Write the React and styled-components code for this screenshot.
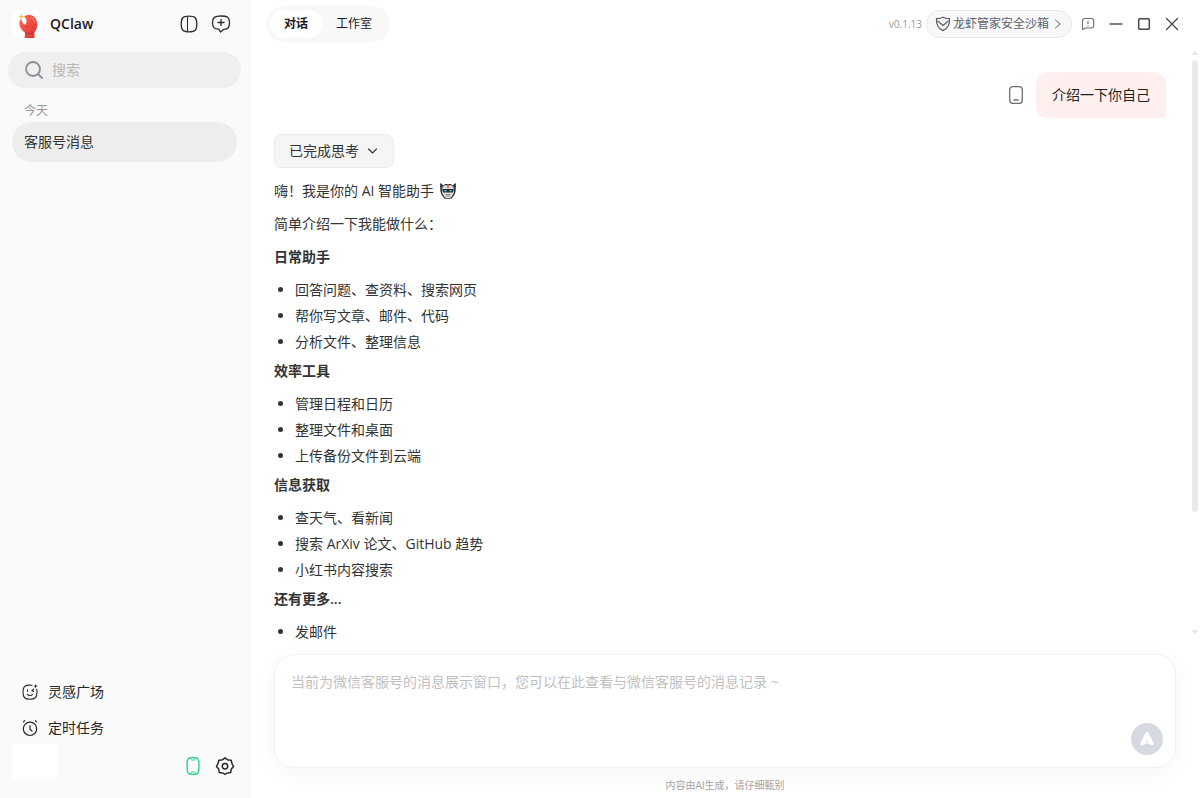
import React from "react";
import styled, { createGlobalStyle } from "styled-components";

const GlobalStyle = createGlobalStyle`
  *, *::before, *::after { box-sizing: border-box; }
  body {
    margin: 0;
    background: #fff;
    color: #333;
    font-family: "Open Sans", "Noto Sans CJK SC", sans-serif;
    font-size: 14px;
    line-height: 22px;
  }
  button, input, textarea { font: inherit; color: inherit; }
  button { border: 0; padding: 0; background: none; cursor: pointer; }
  svg { display: block; flex: none; }
`;

const Shell = styled.div`
  display: flex;
  height: 100vh;
  min-height: 480px;
`;

/* ---------- Sidebar ---------- */

const Sidebar = styled.aside`
  display: flex;
  flex-direction: column;
  flex: 0 0 250px;
  min-width: 0;
  padding-bottom: 17px;
  background: #fafafa;
  border-right: 1px solid #f0f0f0;
`;

const Brand = styled.header`
  display: flex;
  align-items: center;
  gap: 9px;
  height: 48px;
  padding: 0 16px 0 13px;
`;

const Logo = styled.span`
  width: 28px;
  height: 28px;
  border-radius: 7px;
  background: #fff;
`;

const BrandName = styled.h1`
  flex: 1;
  margin: 0;
  color: #1a1a1a;
  font-size: 14px;
  font-weight: 600;
`;

const IconButton = styled.button`
  display: grid;
  place-items: center;
  width: ${(p) => p.$width || 24}px;
  height: ${(p) => p.$height || 28}px;
  color: ${(p) => p.$color || "#2b2b2b"};
`;

const IconGroup = styled.div`
  display: flex;
  gap: 8px;
`;

const SearchBox = styled.label`
  display: flex;
  align-items: center;
  gap: 8px;
  height: 36px;
  margin: 4px 8px 0;
  padding: 0 16px;
  border-radius: 18px;
  background: #efefef;
  color: #8b8e96;
`;

const SearchInput = styled.input`
  flex: 1;
  min-width: 0;
  padding: 0;
  border: 0;
  outline: 0;
  background: none;
  &::placeholder { color: #b9b9b9; opacity: 1; }
`;

const GroupLabel = styled.h2`
  margin: 12px 24px 0;
  color: #999;
  font-size: 12px;
  font-weight: 400;
  line-height: 22px;
`;

const Conversation = styled.button`
  height: 40px;
  margin: 0 12px;
  padding: 0 12px;
  border-radius: 20px;
  background: #ededed;
  text-align: left;
`;

const SideNav = styled.nav`
  display: flex;
  flex-direction: column;
  gap: 4px;
  margin-top: auto;
`;

const SideLink = styled.a`
  display: flex;
  align-items: center;
  gap: 9px;
  height: 32px;
  padding: 0 21px;
  color: #262626;
  text-decoration: none;
`;

const SideFooter = styled.footer`
  display: flex;
  align-items: flex-end;
  justify-content: space-between;
  padding: 0 12px;
`;

const Account = styled.div`
  width: 45px;
  height: 37px;
  background: #fff;
`;

/* ---------- Main column ---------- */

const Main = styled.main`
  display: flex;
  flex-direction: column;
  flex: 1;
  min-width: 0;
`;

const TopBar = styled.header`
  display: flex;
  align-items: center;
  justify-content: space-between;
  height: 48px;
  padding: 0 14px 0 16px;
`;

const Tabs = styled.div`
  display: flex;
  padding: 4px;
  border-radius: 18px;
  background: #f8f8f8;
`;

const Tab = styled.button`
  height: 28px;
  padding: 0 14px;
  border-radius: 14px;
  background: ${(p) => (p.$active ? "#fff" : "transparent")};
  color: #1a1a1a;
  font-size: 12px;
  font-weight: ${(p) => (p.$active ? 600 : 400)};
`;

const WindowTools = styled.div`
  display: flex;
  align-items: center;
`;

const Version = styled.span`
  margin-right: 4px;
  color: #999;
  font-size: 10px;
`;

const SafetyPill = styled.button`
  display: flex;
  align-items: center;
  gap: 2px;
  height: 28px;
  margin-right: 2px;
  padding: 0 8px;
  border: 1px solid #e9e9e9;
  border-radius: 14px;
  background: #f8f8f8;
  color: #5c5f66;
  font-size: 12px;
`;

const ChatArea = styled.section`
  display: flex;
  flex: 1;
  min-height: 0;
`;

const Messages = styled.div`
  flex: 1;
  padding: 24px 26px 0 24px;
  overflow-y: auto;
  scrollbar-width: none;
`;

const Rail = styled.div`
  display: flex;
  flex-direction: column;
  flex: 0 0 8px;
  padding: 3px 2px 6px 0;
  color: #e3e3e3;
`;

const RailTrack = styled.div`
  flex: 1;
  margin: 5px 0;
`;

const RailThumb = styled.div`
  height: 80%;
  border-radius: 3px;
  background: #e9e9e9;
`;

const UserMessage = styled.div`
  display: flex;
  align-items: center;
  justify-content: flex-end;
  gap: 12px;
  color: #6b6e76;
`;

const Bubble = styled.p`
  margin: 0;
  padding: 12px 16px;
  border-radius: 12px 12px 2px 12px;
  background: #ffefee;
  color: #1f1f1f;
`;

const ThinkingToggle = styled.button`
  display: flex;
  align-items: center;
  gap: 8px;
  height: 34px;
  margin: 16px 0 12px;
  padding: 0 14px;
  border: 1px solid #ebebeb;
  border-radius: 8px;
  background: #f5f5f5;
`;

const Paragraph = styled.p`
  display: flex;
  align-items: center;
  gap: 6px;
  margin: 0 0 11px;
`;

const SectionTitle = styled.h3`
  margin: 0 0 11px;
  font-size: 14px;
  font-weight: 600;
`;

const Bullets = styled.ul`
  display: flex;
  flex-direction: column;
  gap: 4px;
  margin: 0 0 7px;
  padding-left: 21px;
`;

const Composer = styled.form`
  display: flex;
  align-items: flex-end;
  height: 114px;
  margin: 14px 24px 0;
  padding: 12px;
  border: 1px solid #f2f2f2;
  border-radius: 20px;
  background: #fff;
  box-shadow: 0 6px 24px rgba(0, 0, 0, 0.04);
`;

const Prompt = styled.textarea`
  flex: 1;
  align-self: stretch;
  padding: 4px;
  border: 0;
  outline: 0;
  resize: none;
  background: none;
  &::placeholder { color: #bfbfbf; opacity: 1; }
`;

const SendButton = styled.button`
  display: grid;
  place-items: center;
  width: 32px;
  height: 32px;
  border-radius: 50%;
  background: #d7d9e1;
`;

const Disclaimer = styled.p`
  margin: 8px 0 4px;
  color: #a3a3a3;
  font-size: 10px;
  line-height: 18px;
  text-align: center;
`;

/* ---------- Drawings ---------- */

const Line = ({ w = 18, h = w, box = `0 0 ${w} ${h}`, sw = 1.3, children }) => (
  <svg
    width={w}
    height={h}
    viewBox={box}
    fill="none"
    stroke="currentColor"
    strokeWidth={sw}
    strokeLinecap="round"
    strokeLinejoin="round"
    aria-hidden="true"
  >
    {children}
  </svg>
);

const ClawLogo = () => (
  <svg width="28" height="28" viewBox="0 0 28 28" aria-hidden="true">
    <defs>
      <linearGradient id="claw" x1="0" y1="0" x2="1" y2="1">
        <stop offset="0" stopColor="#ff7560" />
        <stop offset="0.5" stopColor="#ee4a40" />
        <stop offset="1" stopColor="#d93630" />
      </linearGradient>
    </defs>
    <path
      d="M11 6.500C13 5 15.200 4.400 17.500 4.900c4.300.9 6.900 5 6.700 10.100-.1 3.200-1.100 5.600-2.900 7.400l.3 6.600h-10l.4-6.200C9 20.800 6.500 17.600 6.300 14c-.1-2 .4-3.800 1.600-4.900l1.300 2.600c.6 1.400 1.500 2.600 2.800 3.200 1.300-1.400 1.900-3.400 1.300-5.200-.4-1.300-1.300-2.200-2.300-3.200z"
      fill="url(#claw)"
    />
    <path d="M11.500 14.800c.8 1.500 1.800 2.300 3.200 2.600" fill="none" stroke="#cf2f2a" strokeWidth="0.900" strokeLinecap="round" />
    <path d="M12 22.900c2.900 1.100 6.400.9 9.200-.5" fill="none" stroke="#c42a27" strokeWidth="0.900" />
    <path d="M17.500 7.200c2.400.9 3.900 3 4.100 5.800" fill="none" stroke="#ff9a86" strokeWidth="1.200" strokeLinecap="round" opacity="0.600" />
    <path d="M8.300 3.200l.8 2.600 2.600.9-2.600.9-.8 2.600-.8-2.600-2.600-.9 2.600-.9z" fill="#ffc638" />
  </svg>
);

const PanelIcon = () => (
  <Line w={18}>
    <path d="M9 1.200c6.200 0 7.800 1.600 7.800 7.800s-1.600 7.800-7.800 7.800S1.200 15.200 1.200 9 2.800 1.200 9 1.200z" />
    <path d="M7.500 1.500v15" strokeWidth="1.100" />
  </Line>
);

const NewChatIcon = () => (
  <Line w={20} h={18}>
    <path d="M10 1c6.300 0 8.500 1.300 8.500 6.500S17 14 12.800 14.300L9.500 17 8 14.200C3 14 1.500 12.500 1.500 7.500S3.700 1 10 1z" />
    <path d="M10 4.500v6M7 7.500h6" />
  </Line>
);

const SearchIcon = () => (
  <Line w={20} sw={1.8}>
    <circle cx="9" cy="9" r="7" />
    <path d="M14 14l4 4" />
  </Line>
);

const InspireIcon = () => (
  <Line w={18} sw={1.1}>
    <path d="M11 2.300C5 1.500 2 2.800 2 9.200c0 5.500 1.800 7 7 7s7-1.500 7-7c0-1.200-.1-2.200-.3-3" />
    <path d="M6.500 6.700v1.600M12.600 6.200l-1.700 1.300 1.700.9M6.300 11.300c1.300 1.500 3.800 1.500 5.200 0" />
    <path d="M14.600 1l.6 1.600 1.600.6-1.600.6-.6 1.600-.6-1.600-1.600-.6 1.600-.6z" fill="currentColor" stroke="none" />
  </Line>
);

const ClockIcon = () => (
  <Line w={18} sw={1.2}>
    <circle cx="9" cy="9.800" r="6.700" />
    <path d="M9 6.500v3.800l2 1.700M3.600 1.700L2.500 2.800M14.400 1.700l1.100 1.100" />
  </Line>
);

const LinkedPhoneIcon = () => (
  <Line w={16} h={20} sw={1.4}>
    <path d="M8 1.500c5 0 6 1 6 8.500s-1 8.500-6 8.500-6-1-6-8.500 1-8.500 6-8.500z" />
    <path d="M5.300 2.200c.3 1.300.8 1.800 1.700 1.800h2c.9 0 1.400-.5 1.700-1.800M5.300 17.800c.3-1.300.8-1.800 1.700-1.800h2c.9 0 1.400.5 1.700 1.800" strokeWidth="1" />
  </Line>
);

const GearIcon = () => (
  <Line w={20} sw={1.5}>
    <path d="M10 1.800l2.300 1.900c.3.200.6.300 1 .3l2.900.2.600 2.900c.1.300.2.600.4.900l1.300 2.400-1.900 2.300c-.2.300-.3.500-.4.900l-.5 2.800-3 .5c-.3 0-.6.200-.9.300L10 18.500l-1.800-1.300c-.3-.1-.6-.3-.9-.3l-3-.5-.5-2.800c-.1-.4-.2-.6-.4-.9l-1.900-2.300L2.800 8c.2-.3.300-.6.400-.9l.6-2.900L6.700 4c.4 0 .7-.1 1-.3z" />
    <circle cx="10" cy="10.200" r="2.700" />
  </Line>
);

const ShieldIcon = () => (
  <Line w={16} sw={1.3}>
    <path d="M8 1.200c1.800 1 4 1.500 6.500 1.400.4 5.800-2 9.900-6.500 12.100C3.500 12.500 1.100 8.400 1.500 2.600 4 2.700 6.200 2.200 8 1.200z" />
    <path d="M3 5.300L8 9.500l5-4.200" />
  </Line>
);

const FeedbackIcon = () => (
  <Line w={14} sw={1.1}>
    <path d="M4 1.500h6.500c1.500 0 2.200.7 2.200 2.200v5.100c0 1.500-.7 2.200-2.200 2.200H4.500l-3 1.500V3.700c0-1.500.8-2.200 2.500-2.200z" />
    <path d="M7 4v2.800M7 8.700v.2" />
  </Line>
);

const PhoneIcon = () => (
  <Line w={16} h={20} sw={1.3}>
    <rect x="1.700" y="1.700" width="12.600" height="16.600" rx="3" />
    <path d="M6 15h4" />
  </Line>
);

const RobotEmoji = () => (
  <svg width="16" height="16" viewBox="0 0 16 16" role="img" aria-label="robot">
    <path d="M0 .3l1.500.5L3.500 2.500 5 1h6l1.500 1.500 2-1.700L16 .3l-.4 8.200-1.200 3.500-3.100 3.700H4.700L1.600 12 .4 8.500z" fill="#33373b" />
    <path d="M2.500 4L5 2.200h6L13.500 4l.3 6-2.100 3.600L10 15H6l-1.700-1.400L2.200 10z" fill="#dfe0e1" />
    <path d="M7.200 1.500h1.600v3.800H7.200z" fill="#e0533d" />
    <path d="M2.600 6h10.800l-.6 3.400H3.200z" fill="#24292e" />
    <path d="M4.200 7h2.300v1.600H4.200zM9.500 7h2.300v1.600H9.500z" fill="#43b8dc" />
    <path d="M5.500 11.500h5M6 13h4" stroke="#777b80" strokeWidth="0.800" />
  </svg>
);

const SendIcon = () => (
  <svg width="16" height="16" viewBox="0 0 16 16" aria-hidden="true">
    <path d="M8 .8c.7 0 1.200.4 1.500 1l5.100 10.400c.6 1.300-.3 2.300-1.600 1.900L8 12.800l-5 1.300c-1.300.4-2.200-.6-1.600-1.900L6.500 1.800C6.800 1.200 7.300.8 8 .8z" fill="#fff" />
    <path d="M8 8.500V14" stroke="#d7d9e1" strokeWidth="1" />
  </svg>
);

const RailArrow = ({ down }) => (
  <svg width="6" height="4" viewBox="0 0 6 4" aria-hidden="true">
    <path d={down ? "M0 0h6L3 4z" : "M0 4h6L3 0z"} fill="currentColor" />
  </svg>
);

/* ---------- Content ---------- */

const SECTIONS = [
  { title: "日常助手", items: ["回答问题、查资料、搜索网页", "帮你写文章、邮件、代码", "分析文件、整理信息"] },
  { title: "效率工具", items: ["管理日程和日历", "整理文件和桌面", "上传备份文件到云端"] },
  { title: "信息获取", items: ["查天气、看新闻", "搜索 ArXiv 论文、GitHub 趋势", "小红书内容搜索"] },
  { title: "还有更多...", items: ["发邮件"] },
];

export default function App() {
  return (
    <>
      <GlobalStyle />
      <Shell>
        <Sidebar>
          <Brand>
            <Logo><ClawLogo /></Logo>
            <BrandName>QClaw</BrandName>
            <IconGroup>
              <IconButton type="button" aria-label="收起侧栏"><PanelIcon /></IconButton>
              <IconButton type="button" aria-label="新建对话"><NewChatIcon /></IconButton>
            </IconGroup>
          </Brand>
          <SearchBox>
            <SearchIcon />
            <SearchInput type="search" placeholder="搜索" aria-label="搜索" />
          </SearchBox>
          <GroupLabel>今天</GroupLabel>
          <Conversation type="button">客服号消息</Conversation>
          <SideNav>
            <SideLink href="#inspire"><InspireIcon />灵感广场</SideLink>
            <SideLink href="#schedule"><ClockIcon />定时任务</SideLink>
          </SideNav>
          <SideFooter>
            <Account />
            <IconGroup>
              <IconButton type="button" $height={30} $color="#2fd08a" aria-label="手机"><LinkedPhoneIcon /></IconButton>
              <IconButton type="button" $height={30} aria-label="设置"><GearIcon /></IconButton>
            </IconGroup>
          </SideFooter>
        </Sidebar>

        <Main>
          <TopBar>
            <Tabs>
              <Tab type="button" $active>对话</Tab>
              <Tab type="button">工作室</Tab>
            </Tabs>
            <WindowTools>
              <Version>v0.1.13</Version>
              <SafetyPill type="button">
                <ShieldIcon />
                龙虾管家安全沙箱
                <Line w={12} sw={1}><path d="M4.500 2L9 6l-4.500 4" /></Line>
              </SafetyPill>
              <IconButton type="button" $width={28} $color="#6b6e74" aria-label="反馈"><FeedbackIcon /></IconButton>
              <IconButton type="button" $width={28} $color="#555" aria-label="最小化">
                <Line w={14} sw={1.4}><path d="M1 7h12" /></Line>
              </IconButton>
              <IconButton type="button" $width={28} $color="#444" aria-label="最大化">
                <Line w={14} sw={1.5}><rect x="1.700" y="1.700" width="10.600" height="10.600" rx="1" /></Line>
              </IconButton>
              <IconButton type="button" $width={28} $color="#444" aria-label="关闭">
                <Line w={14} sw={1.2}><path d="M1.500 1.500l11 11M12.500 1.500l-11 11" /></Line>
              </IconButton>
            </WindowTools>
          </TopBar>

          <ChatArea>
            <Messages>
              <UserMessage>
                <PhoneIcon />
                <Bubble>介绍一下你自己</Bubble>
              </UserMessage>
              <ThinkingToggle type="button">
                已完成思考
                <Line w={12} sw={1.1}><path d="M1.500 4l4 4 4-4" /></Line>
              </ThinkingToggle>
              <Paragraph>嗨！我是你的 AI 智能助手<RobotEmoji /></Paragraph>
              <Paragraph>简单介绍一下我能做什么：</Paragraph>
              {SECTIONS.map((section) => (
                <React.Fragment key={section.title}>
                  <SectionTitle>{section.title}</SectionTitle>
                  <Bullets>
                    {section.items.map((item) => <li key={item}>{item}</li>)}
                  </Bullets>
                </React.Fragment>
              ))}
            </Messages>
            <Rail aria-hidden="true">
              <RailArrow />
              <RailTrack><RailThumb /></RailTrack>
              <RailArrow down />
            </Rail>
          </ChatArea>

          <Composer>
            <Prompt
              aria-label="消息"
              placeholder="当前为微信客服号的消息展示窗口，您可以在此查看与微信客服号的消息记录 ~"
            />
            <SendButton type="button" aria-label="发送"><SendIcon /></SendButton>
          </Composer>
          <Disclaimer>内容由AI生成，请仔细甄别</Disclaimer>
        </Main>
      </Shell>
    </>
  );
}
